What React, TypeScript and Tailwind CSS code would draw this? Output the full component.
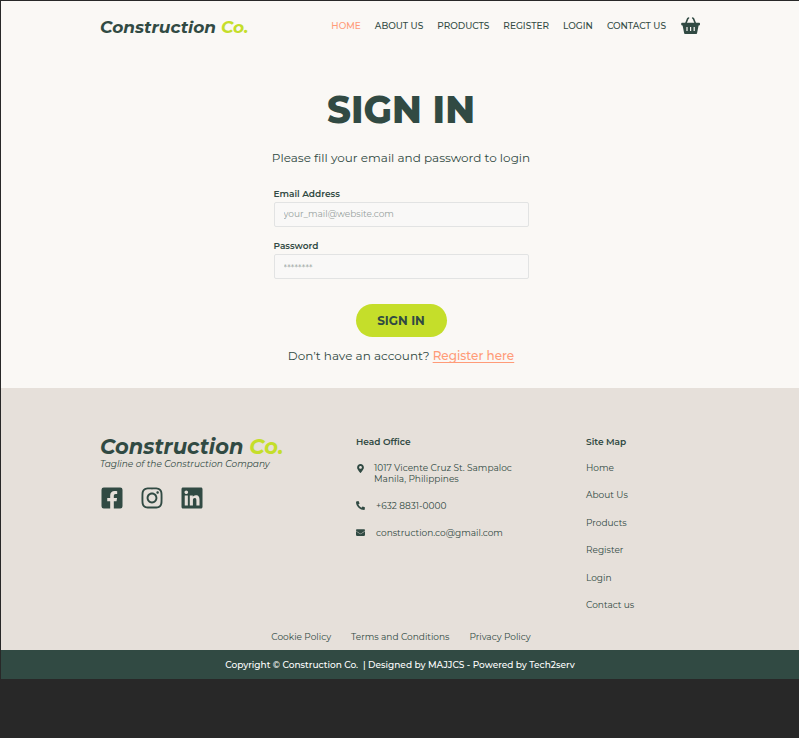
import { FaFacebookSquare, FaInstagram, FaLinkedin, FaMapMarkerAlt, FaPhoneAlt, FaEnvelope } from "react-icons/fa";

const navLinks = ["ABOUT US", "PRODUCTS", "REGISTER", "LOGIN", "CONTACT US"];
const siteMap = ["Home", "About Us", "Products", "Register", "Login", "Contact us"];
const policies = ["Cookie Policy", "Terms and Conditions", "Privacy Policy"];

function BasketIcon() {
  return (
    <svg viewBox="0 0 20 18" className="h-[18px] w-5" aria-hidden="true">
      <g fill="none" stroke="currentColor" strokeWidth="1.6" strokeLinecap="round">
        <path d="M8.500 1 L7.700 1.800 L5.800 6.500" />
        <path d="M12.700 1 L13.500 1.800 L15.400 6.500" />
      </g>
      <path
        fill="currentColor"
        fillRule="evenodd"
        d="M2 5.800h17.200a.8.8 0 0 1 .8.8v1a.8.8 0 0 1-.8.8h-.6l-1.500 7.500a1.500 1.500 0 0 1-1.500 1.200H5.600a1.500 1.500 0 0 1-1.500-1.200L2.600 8.400H2a.8.8 0 0 1-.8-.8v-1A.8.8 0 0 1 2 5.800zM6.400 10v4h1.200v-4zM10 10v4h1.200v-4zM13.600 10v4h1.200v-4z"
      />
    </svg>
  );
}

function Header() {
  return (
    <header className="mx-auto flex h-[50px] w-full max-w-[600px] items-center justify-between">
      <a href="#" className="pt-px text-[17px] leading-6 font-bold whitespace-nowrap italic">
        Construction <span className="text-[#c5de2a]">Co.</span>
      </a>
      <nav className="flex items-center gap-[14px] text-[9px] leading-4 font-medium whitespace-nowrap">
        <a href="#" className="text-[#ff9b78]">HOME</a>
        {navLinks.map((label) => (
          <a key={label} href="#">{label}</a>
        ))}
        <a href="#" aria-label="Basket">
          <BasketIcon />
        </a>
      </nav>
    </header>
  );
}

function SignIn() {
  return (
    <main className="mx-auto flex w-full max-w-[259px] flex-col items-center pt-[35px] pb-[22px] pl-0.5 whitespace-nowrap">
      <h1 className="text-[37px] leading-[48px] font-extrabold">SIGN IN</h1>
      <p className="mt-[14px] text-[12px] leading-5">Please fill your email and password to login</p>
      <form className="mt-5 flex w-full flex-col items-center" onSubmit={(e) => e.preventDefault()}>
        <div className="flex w-full flex-col gap-[13px] px-px">
          <div className="flex flex-col gap-0.5">
            <label htmlFor="email" className="text-[9px] leading-3 font-semibold">Email Address</label>
            <input
              id="email"
              type="email"
              placeholder="your_mail@website.com"
              className="h-[25px] w-full rounded-xs border border-[#e2e3e3] bg-[#f9f8f7] px-[9px] pb-0.5 text-[9px] leading-4 outline-none placeholder:text-[#98a29e]"
            />
          </div>
          <div className="flex flex-col gap-0.5">
            <label htmlFor="password" className="text-[9px] leading-3 font-semibold">Password</label>
            <input
              id="password"
              type="password"
              placeholder="********"
              className="h-[25px] w-full rounded-xs border border-[#e2e3e3] bg-[#f9f8f7] px-[9px] pt-0.5 text-[9px] leading-4 outline-none placeholder:text-[#98a29e]"
            />
          </div>
        </div>
        <button type="submit" className="mt-[25px] h-[33px] w-[91px] rounded-full bg-[#c5de2a] text-[12px] font-bold">
          SIGN IN
        </button>
      </form>
      <p className="mt-[9px] text-[12px] leading-5">
        Don’t have an account?{" "}
        <a
          href="#"
          className="font-medium text-[#ff9b78] underline underline-offset-2 [text-decoration-skip-ink:none]"
        >
          Register here
        </a>
      </p>
    </main>
  );
}

function Footer() {
  return (
    <footer>
      <div className="bg-[#e6e0da] pt-[46px] pb-[7px]">
        <div className="mx-auto grid w-full max-w-[600px] grid-cols-[256px_230px_1fr] whitespace-nowrap">
          <section>
            <p className="text-[21px] leading-[25px] font-bold italic">
              Construction <span className="text-[#c5de2a]">Co.</span>
            </p>
            <p className="text-[9px] leading-[9px] italic">Tagline of the Construction Company</p>
            <div className="mt-[18px] flex gap-4">
              <a href="#" aria-label="Facebook"><FaFacebookSquare className="size-6" /></a>
              <a href="#" aria-label="Instagram"><FaInstagram className="size-6" /></a>
              <a href="#" aria-label="LinkedIn"><FaLinkedin className="size-6" /></a>
            </div>
          </section>
          <section className="pt-0.5 text-[9px] leading-[11px]">
            <h2 className="font-semibold">Head Office</h2>
            <address className="mt-[15px] flex flex-col gap-4 not-italic">
              <div className="flex gap-[9px]">
                <FaMapMarkerAlt className="mt-0.5 size-[9px]" />
                <p>
                  1017 Vicente Cruz St. Sampaloc
                  <br />
                  Manila, Philippines
                </p>
              </div>
              <div className="flex gap-[11px]">
                <FaPhoneAlt className="mt-px size-[9px]" />
                <p>+632 8831-0000</p>
              </div>
              <div className="flex gap-[11px]">
                <FaEnvelope className="mt-px size-[9px]" />
                <p>construction.co@gmail.com</p>
              </div>
            </address>
          </section>
          <section className="pt-0.5 text-[9px] leading-3">
            <h2 className="font-semibold">Site Map</h2>
            <ul className="mt-[14px] flex h-[149px] flex-col justify-between">
              {siteMap.map((label) => (
                <li key={label}><a href="#">{label}</a></li>
              ))}
            </ul>
          </section>
        </div>
        <div className="mt-5 flex justify-center gap-5 pl-0.5 text-[9px] leading-3">
          {policies.map((label) => (
            <a key={label} href="#">{label}</a>
          ))}
        </div>
      </div>
      <p className="bg-[#314a43] text-center text-[9px] leading-[29px] font-medium whitespace-pre text-white">
        {"Copyright © Construction Co.  | Designed by MAJJCS - Powered by Tech2serv"}
      </p>
    </footer>
  );
}

export default function App() {
  return (
    <div className="min-h-screen bg-[#282828] pt-px pl-px font-['Montserrat','Inter',sans-serif] text-[#314a43]">
      <div className="bg-[#faf8f5]">
        <Header />
        <SignIn />
        <Footer />
      </div>
    </div>
  );
}
